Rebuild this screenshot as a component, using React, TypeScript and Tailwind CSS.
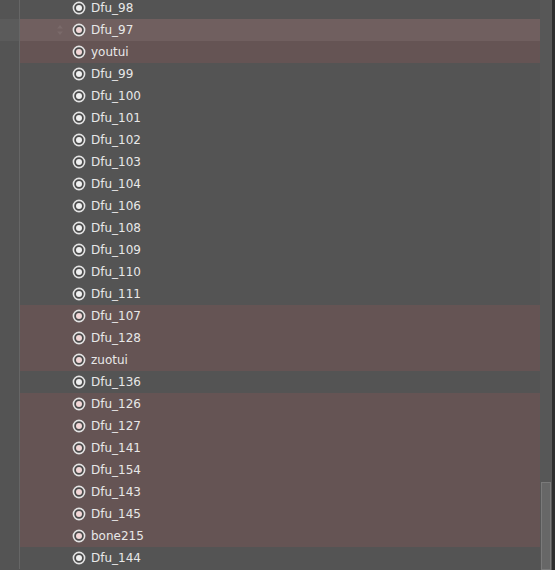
import React from 'react'

const rows = [
  { name: 'Dfu_98', hl: false },
  { name: 'Dfu_97', hl: true, hover: true },
  { name: 'youtui', hl: true },
  { name: 'Dfu_99', hl: false },
  { name: 'Dfu_100', hl: false },
  { name: 'Dfu_101', hl: false },
  { name: 'Dfu_102', hl: false },
  { name: 'Dfu_103', hl: false },
  { name: 'Dfu_104', hl: false },
  { name: 'Dfu_106', hl: false },
  { name: 'Dfu_108', hl: false },
  { name: 'Dfu_109', hl: false },
  { name: 'Dfu_110', hl: false },
  { name: 'Dfu_111', hl: false },
  { name: 'Dfu_107', hl: true },
  { name: 'Dfu_128', hl: true },
  { name: 'zuotui', hl: true },
  { name: 'Dfu_136', hl: false },
  { name: 'Dfu_126', hl: true },
  { name: 'Dfu_127', hl: true },
  { name: 'Dfu_141', hl: true },
  { name: 'Dfu_154', hl: true },
  { name: 'Dfu_143', hl: true },
  { name: 'Dfu_145', hl: true },
  { name: 'bone215', hl: true },
  { name: 'Dfu_144', hl: false },
]

function Radio({ pink }: { pink: boolean }) {
  return (
    <svg width="14" height="14" viewBox="0 0 14 14">
      <circle cx="7" cy="7" r="5.6" fill="#4a4a4a" stroke="#e4e4e4" strokeWidth="1.6" />
      <circle cx="7" cy="7" r="3" fill={pink ? '#f2d6d6' : '#f0f0f0'} />
    </svg>
  )
}

function DragHandle() {
  return (
    <svg width="8" height="12" viewBox="0 0 8 12">
      <path d="M4 1 L7 4.5 H1 Z" fill="#7a6a6a" />
      <path d="M4 11 L7 7.5 H1 Z" fill="#7a6a6a" />
    </svg>
  )
}

export default function App() {
  return (
    <div className="flex w-[555px] h-[570px] overflow-hidden bg-[#545454]" style={{ fontFamily: "'DejaVu Sans', sans-serif" }}>
      <div className="flex-1 h-full overflow-hidden">
        <div className="-mt-[3px] flex flex-col">
          {rows.map((r) => (
            <div key={r.name} className={`flex h-[22px] ${r.hover ? 'bg-[#5b5b5b]' : ''}`}>
              <div className="w-[19px] shrink-0" />
              <div className="w-px shrink-0 bg-[#666666]" />
              <div
                className={`flex flex-1 items-center ${
                  r.hover ? 'bg-[#705f5f]' : r.hl ? 'bg-[#655454]' : ''
                }`}
              >
                <div className="w-[52px] shrink-0 flex justify-end pr-[8px]">
                  {r.hover && <DragHandle />}
                </div>
                <Radio pink={r.hl} />
                <span className="ml-[5px] text-[12px] text-[#e8e8e8] leading-none">{r.name}</span>
              </div>
            </div>
          ))}
        </div>
      </div>
      <div className="w-[12px] h-full flex flex-col bg-[#575757]">
        <div className="h-[482px] shrink-0" />
        <div className="flex-1 mx-[1px] bg-[#676767] border border-[#7a7a7a]" />
      </div>
      <div className="w-[3px] h-full bg-[#2e2e2e]" />
    </div>
  )
}
